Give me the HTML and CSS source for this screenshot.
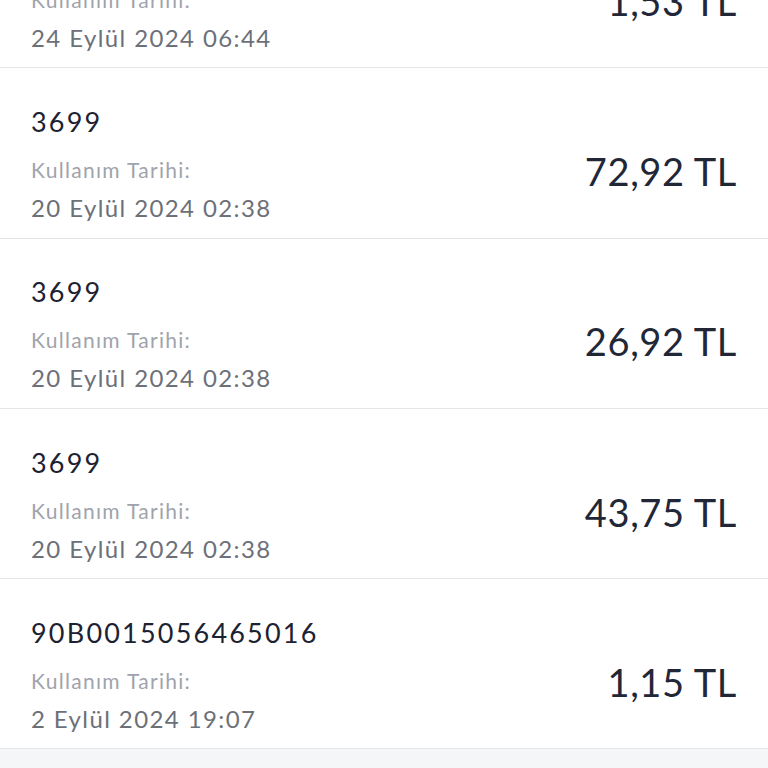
FILE: index.html
```html
<!DOCTYPE html>
<html lang="tr">
<head>
  <meta charset="UTF-8">
  <meta name="viewport" content="width=device-width, initial-scale=1.0">
  <title>Kullanım Geçmişi</title>
  <link rel="stylesheet" href="styles.css">
</head>
<body>
  <ul class="usage-list">
    <li class="usage-item">
      <div class="usage-info">
        <div class="usage-code">3699</div>
        <div class="usage-label">Kullanım Tarihi:</div>
        <div class="usage-date">24 Eylül 2024 06:44</div>
      </div>
      <div class="usage-amount">1,53 TL</div>
    </li>
    <li class="usage-item">
      <div class="usage-info">
        <div class="usage-code">3699</div>
        <div class="usage-label">Kullanım Tarihi:</div>
        <div class="usage-date">20 Eylül 2024 02:38</div>
      </div>
      <div class="usage-amount">72,92 TL</div>
    </li>
    <li class="usage-item">
      <div class="usage-info">
        <div class="usage-code">3699</div>
        <div class="usage-label">Kullanım Tarihi:</div>
        <div class="usage-date">20 Eylül 2024 02:38</div>
      </div>
      <div class="usage-amount">26,92 TL</div>
    </li>
    <li class="usage-item">
      <div class="usage-info">
        <div class="usage-code">3699</div>
        <div class="usage-label">Kullanım Tarihi:</div>
        <div class="usage-date">20 Eylül 2024 02:38</div>
      </div>
      <div class="usage-amount">43,75 TL</div>
    </li>
    <li class="usage-item">
      <div class="usage-info">
        <div class="usage-code">90B0015056465016</div>
        <div class="usage-label">Kullanım Tarihi:</div>
        <div class="usage-date">2 Eylül 2024 19:07</div>
      </div>
      <div class="usage-amount">1,15 TL</div>
    </li>
  </ul>
</body>
</html>
```

FILE: styles.css
```css
html, body {
  margin: 0;
  padding: 0;
}

body {
  font-family: Lato, "Open Sans", sans-serif;
  background-color: #f5f6f8;
  overflow: hidden;
}

.usage-list {
  list-style: none;
  margin: -102px 0 0 0;
  padding: 0;
}

.usage-item {
  display: flex;
  justify-content: space-between;
  align-items: center;
  box-sizing: border-box;
  height: 170.3px;
  padding: 32px 31px 10px 31px;
  background-color: #ffffff;
  border-bottom: 1.5px solid #e3e5e9;
}

.usage-code {
  font-size: 27px;
  line-height: 38px;
  letter-spacing: 2.2px;
  color: #1d2232;
}

.usage-label {
  margin-top: 14px;
  font-size: 21px;
  line-height: 30px;
  letter-spacing: 1.3px;
  color: #9fa3ac;
}

.usage-date {
  margin-top: 6px;
  font-size: 24px;
  line-height: 34px;
  letter-spacing: 1.4px;
  color: #6c7079;
}

.usage-amount {
  margin-top: 14px;
  font-size: 38px;
  letter-spacing: 0.6px;
  color: #222738;
}
```
